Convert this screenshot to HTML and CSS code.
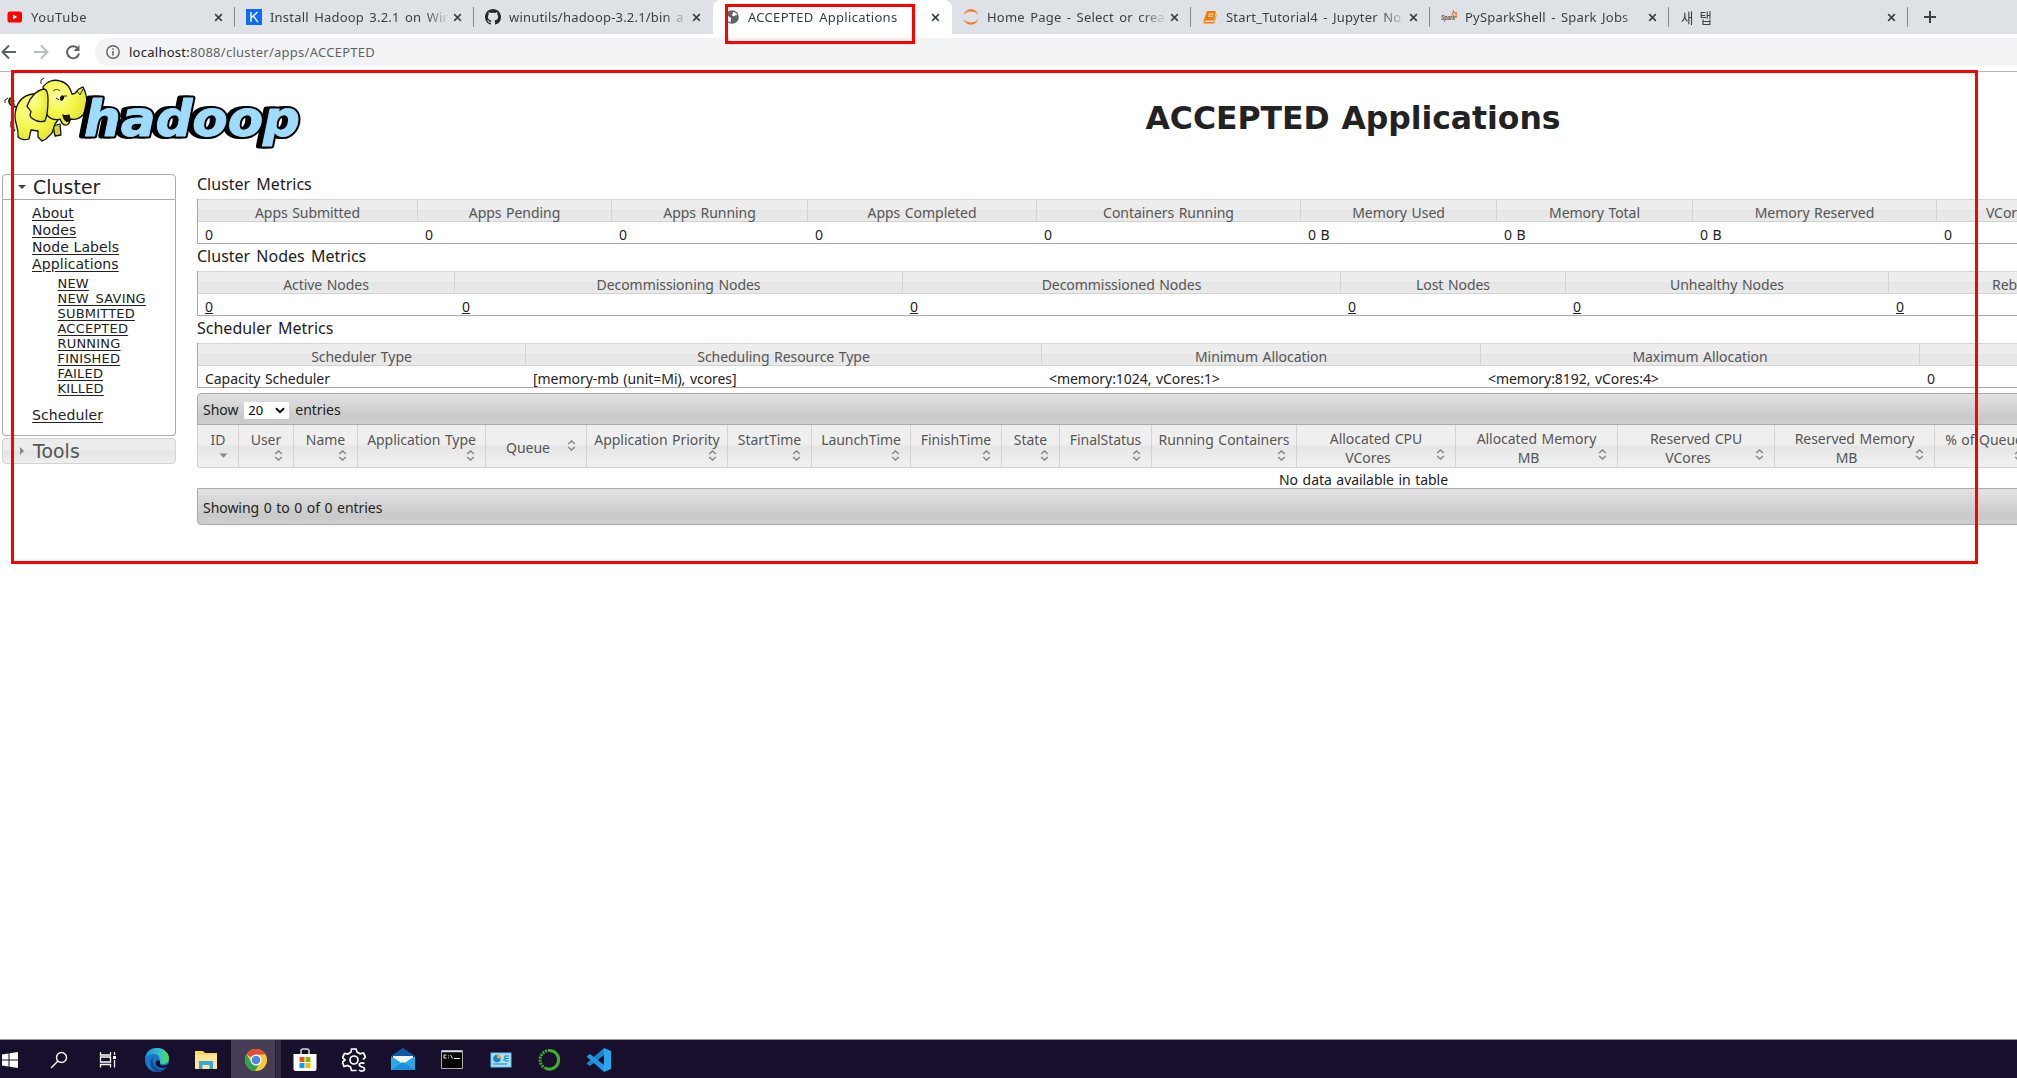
FILE: index.html
```html
<!DOCTYPE html>
<html lang="ko">
<head>
<meta charset="utf-8">
<title>ACCEPTED Applications</title>
<link rel="stylesheet" href="styles.css">
</head>
<body>
<svg class="defs" width="0" height="0">
  <symbol id="close" viewBox="0 0 10 10"><path d="M1.3 1.3 8.7 8.7M8.7 1.3 1.3 8.7" stroke="#3c4043" stroke-width="1.8" fill="none"/></symbol>
  <symbol id="sort" viewBox="0 0 9 11"><path d="M1.2 4 4.5 .9 7.8 4M1.2 7 4.5 10.1 7.8 7" stroke="#888" stroke-width="1.5" fill="none"/></symbol>
</svg>
<div class="screen">
  <header class="tabs">
    <div class="tab first"><svg class="fav" viewBox="0 0 16 16"><rect x="0.500" y="2.500" width="14.500" height="11" rx="2.600" fill="#f00"/><path d="M6 5.600v4.800L10.200 8z" fill="#fff"/></svg><span class="name">YouTube</span><svg class="x"><use href="#close"/></svg></div>
    <div class="tab"><svg class="fav" viewBox="0 0 16 16"><rect width="16" height="16" fill="#0a6cff"/><path d="M5 3v10M11.5 3 5.5 8.6M7.4 7.2 11.8 13" stroke="#fff" stroke-width="1.4" fill="none"/></svg><span class="name">Install Hadoop 3.2.1 on Win</span><svg class="x"><use href="#close"/></svg></div>
    <div class="tab plain"><svg class="fav" viewBox="0 0 16 16"><path fill="#24292e" d="M8 0C3.58 0 0 3.58 0 8c0 3.54 2.29 6.53 5.47 7.59.4.07.55-.17.55-.38v-1.5c-2 .43-2.53-.5-2.7-.95-.09-.23-.48-.95-.82-1.14-.28-.15-.68-.52-.01-.53.63-.01 1.08.58 1.23.82.72 1.21 1.87.87 2.33.66.07-.52.28-.87.51-1.07-1.78-.2-3.64-.89-3.64-3.95 0-.87.31-1.59.82-2.15-.08-.2-.36-1.02.08-2.12 0 0 .67-.21 2.2.82a7.6 7.6 0 0 1 4 0c1.53-1.04 2.2-.82 2.2-.82.44 1.1.16 1.92.08 2.12.51.56.82 1.27.82 2.15 0 3.07-1.87 3.75-3.65 3.95.29.25.54.73.54 1.48v2.2c0 .21.15.46.55.38A8 8 0 0 0 16 8c0-4.42-3.58-8-8-8z"/></svg><span class="name">winutils/hadoop-3.2.1/bin a</span><svg class="x"><use href="#close"/></svg></div>
    <div class="tab active"><svg class="fav" viewBox="0 0 16 16"><circle cx="8" cy="8" r="6.800" fill="#5f6368"/><path d="M2.500 6c2 .3 2 2 3.500 2.300S7 10 6.500 13.500C3.500 12.500 2 9.500 2.500 6zM9 3c2 0 4 1.500 4.300 3-1 .5-2.300-.2-2.800 1-1.500.7-3-.5-2.300-1.500S8.500 4.500 9 3z" fill="#fff"/></svg><span class="name">ACCEPTED Applications</span><svg class="x"><use href="#close"/></svg></div>
    <div class="tab"><svg class="fav" viewBox="0 0 16 16"><path d="M.5 6C2 2 5 .3 8 .3S14 2 15.500 6C13 3.300 11 2.500 8 2.500S3 3.300.5 6zM.5 10c1.500 4 4.500 5.700 7.500 5.700s6-1.700 7.500-5.700c-2.500 2.700-4.500 3.500-7.500 3.500S3 12.700.5 10z" fill="#f37726"/></svg><span class="name">Home Page - Select or crea</span><svg class="x"><use href="#close"/></svg></div>
    <div class="tab"><svg class="fav" viewBox="0 0 16 16"><path d="M5 2h9l-2 9.500H3.500L2.500 13H12l2.300-8 .2 2-2.300 7.500H2.600C1 14 1.500 12 2 10.500z" fill="#f57c00"/><path d="M6.500 5h5M6 7.200h5" stroke="#fff" stroke-width=".9"/></svg><span class="name">Start_Tutorial4 - Jupyter No</span><svg class="x"><use href="#close"/></svg></div>
    <div class="tab"><svg class="fav" viewBox="0 0 16 16"><path d="M10.500 6 12 4.500 12.500 2l1.300 2 1.900-.4-.8 2.300.8 2.300-2.500-.5" fill="none" stroke="#e8743b" stroke-width="1.200"/><text x="0" y="11" font-family="Liberation Sans" font-size="6.500" font-weight="bold" font-style="italic" textLength="14" lengthAdjust="spacingAndGlyphs" fill="#4d4d4d">Spark</text></svg><span class="name">PySparkShell - Spark Jobs</span><svg class="x"><use href="#close"/></svg></div>
    <div class="tab newtab"><span class="name ko">새 탭</span><svg class="x"><use href="#close"/></svg></div>
    <svg class="plus" viewBox="0 0 12 12"><path d="M6 0v12M0 6h12" stroke="#3c4043" stroke-width="2"/></svg>
  </header>
  <nav class="toolbar">
    <svg class="nav" viewBox="0 0 16 16"><path d="M15 8H2M8 1.500 1.500 8 8 14.500" stroke="#5f6368" stroke-width="2" fill="none"/></svg>
    <svg class="nav" viewBox="0 0 16 16"><path d="M1 8h13M8 1.500 14.500 8 8 14.500" stroke="#babcbe" stroke-width="2" fill="none"/></svg>
    <svg class="nav" viewBox="0 0 16 16"><path d="M13 4.800A6 6 0 1 0 14 9.500" stroke="#5f6368" stroke-width="2" fill="none"/><path d="M14.500 1v6h-6z" fill="#5f6368"/></svg>
    <div class="omnibox"><svg class="info" viewBox="0 0 14 14"><circle cx="7" cy="7" r="6.200" fill="none" stroke="#5f6368" stroke-width="1.400"/><path d="M7 6v4.500M7 3.300v1.500" stroke="#5f6368" stroke-width="1.500"/></svg><span class="url"><b>localhost:</b>8088/cluster/apps/ACCEPTED</span></div>
  </nav>
  <main class="page">
    <div class="banner">
      <svg class="logo" viewBox="0 0 304 76">
        <defs><radialGradient id="skin" cx=".35" cy=".35" r=".75"><stop stop-color="#fdfea0"/><stop offset=".5" stop-color="#f5f74c"/><stop offset="1" stop-color="#dfe22e"/></radialGradient></defs>
        <g stroke="#111" stroke-width="1.300" stroke-linejoin="round" fill="url(#skin)">
          <path d="M16 30c-4 0-8-3-7-7s5-2 5 2M14 46l-3-1 0 5 4 4" fill="#6d6e1a"/>
          <path d="M53 49l2 10 6-1-1-11z" fill="#d3d62c"/>
          <path d="M33 17C22 18 15 27 15 40c0 7 4 11 3 20 3 3 8 3 11 2l2-9 7 1v6l4 4 4-2 6-6 3-9 6-8-8-22z"/>
          <path d="M43 10c4-6 11-8 17-6 8 2 10 7 12 13 2 0 4-1 5-3 2-3 4-3 6-4 5 10 5 20 0 28-4 4-9 5-13 4 0 6-5 8-8 4l-2-4c-6 2-12-1-14-6z"/>
          <path d="M44 12c-7 1-14 8-17 17 1 3 4 4 4 6-2 3-1 5 2 7 4 3 8 3 12 2 3-7 3-13 3-21 0-6-1-11-4-11z"/>
          <path d="M63 38c2 1 4 1 6 0l1 5c-2 3-6 1-7-5z" fill="#2a100f"/>
        </g>
        <path d="M53 14c2-2 5-2 7 0M77 14l3 4 3-6M56 21l3 2M64 19h3M41 7V3l3-2M5 26v-3l3-2" fill="none" stroke="#222" stroke-width="1"/><ellipse cx="62" cy="21" rx="2" ry="2.800" fill="#111" transform="rotate(25 62 21)"/>
        <g font-family="DejaVu Sans" font-size="50" font-weight="bold" font-style="italic" stroke-linejoin="round">
          <text x="80" y="59" textLength="216" lengthAdjust="spacingAndGlyphs" fill="#000" stroke="#000" stroke-width="5">hadoop</text>
          <text x="84" y="58.500" textLength="216" lengthAdjust="spacingAndGlyphs" fill="#000" stroke="#000" stroke-width="5">hadoop</text>
          <text x="84" y="58.500" textLength="216" lengthAdjust="spacingAndGlyphs" fill="#9edcff" stroke="#9edcff" stroke-width="1">hadoop</text>
        </g>
      </svg>
      <h1>ACCEPTED Applications</h1>
    </div>
    <div class="body">
      <aside>
        <h3 class="open"><svg viewBox="0 0 8 8"><path d="M0 2h8L4 6z" fill="#454545"/></svg>Cluster</h3>
        <div class="menu">
          <ul><li><a>About</a></li><li><a>Nodes</a></li><li><a>Node Labels</a></li><li><a>Applications</a></li></ul>
          <ul class="sub"><li><a>NEW</a></li><li><a>NEW_SAVING</a></li><li><a>SUBMITTED</a></li><li><a>ACCEPTED</a></li><li><a>RUNNING</a></li><li><a>FINISHED</a></li><li><a>FAILED</a></li><li><a>KILLED</a></li></ul>
          <ul><li><a>Scheduler</a></li></ul>
        </div>
        <h3 class="closed"><svg viewBox="0 0 8 8"><path d="M2 0v8l4-4z" fill="#888"/></svg>Tools</h3>
      </aside>
      <section class="content">
        <h2>Cluster Metrics</h2>
        <div class="metrics t1">
          <b>Apps Submitted</b><b>Apps Pending</b><b>Apps Running</b><b>Apps Completed</b><b>Containers Running</b><b>Memory Used</b><b>Memory Total</b><b>Memory Reserved</b><b>VCores Used</b><b></b>
          <i>0</i><i>0</i><i>0</i><i>0</i><i>0</i><i>0 B</i><i>0 B</i><i>0 B</i><i>0</i><i></i>
        </div>
        <h2>Cluster Nodes Metrics</h2>
        <div class="metrics t2">
          <b>Active Nodes</b><b>Decommissioning Nodes</b><b>Decommissioned Nodes</b><b>Lost Nodes</b><b>Unhealthy Nodes</b><b>Rebooted Nodes</b><b></b>
          <i><a>0</a></i><i><a>0</a></i><i><a>0</a></i><i><a>0</a></i><i><a>0</a></i><i><a>0</a></i><i></i>
        </div>
        <h2>Scheduler Metrics</h2>
        <div class="metrics t3">
          <b>Scheduler Type</b><b>Scheduling Resource Type</b><b>Minimum Allocation</b><b>Maximum Allocation</b><b></b>
          <i>Capacity Scheduler</i><i>[memory-mb (unit=Mi), vcores]</i><i>&lt;memory:1024, vCores:1&gt;</i><i>&lt;memory:8192, vCores:4&gt;</i><i>0</i>
        </div>
        <div class="bar top">Show <span class="select">20<svg viewBox="0 0 10 7"><path d="M1 1.200 5 5.200 9 1.200" stroke="#000" stroke-width="2" fill="none"/></svg></span> entries</div>
        <div class="apps">
          <div><span>ID</span><svg class="s" viewBox="0 0 9 11"><path d="M.5 3.500h8L4.500 7.700z" fill="#888"/></svg></div>
          <div><span>User</span><svg class="s"><use href="#sort"/></svg></div>
          <div><span>Name</span><svg class="s"><use href="#sort"/></svg></div>
          <div><span>Application Type</span><svg class="s"><use href="#sort"/></svg></div>
          <div class="mid"><span>Queue</span><svg class="s"><use href="#sort"/></svg></div>
          <div><span>Application Priority</span><svg class="s"><use href="#sort"/></svg></div>
          <div><span>StartTime</span><svg class="s"><use href="#sort"/></svg></div>
          <div><span>LaunchTime</span><svg class="s"><use href="#sort"/></svg></div>
          <div><span>FinishTime</span><svg class="s"><use href="#sort"/></svg></div>
          <div><span>State</span><svg class="s"><use href="#sort"/></svg></div>
          <div><span>FinalStatus</span><svg class="s"><use href="#sort"/></svg></div>
          <div><span>Running Containers</span><svg class="s"><use href="#sort"/></svg></div>
          <div class="two"><span>Allocated CPU<em>VCores</em></span><svg class="s"><use href="#sort"/></svg></div>
          <div class="two"><span>Allocated Memory<em>MB</em></span><svg class="s"><use href="#sort"/></svg></div>
          <div class="two"><span>Reserved CPU<em>VCores</em></span><svg class="s"><use href="#sort"/></svg></div>
          <div class="two"><span>Reserved Memory<em>MB</em></span><svg class="s"><use href="#sort"/></svg></div>
          <div><span>% of Queue</span><svg class="s"><use href="#sort"/></svg></div>
          <div></div>
        </div>
        <div class="empty">No data available in table</div>
        <div class="bar bottom">Showing 0 to 0 of 0 entries</div>
      </section>
    </div>
  </main>
  <footer class="taskbar">
    <div class="app"><svg viewBox="0 0 24 24"><path d="M4 6.500 10.500 5.500V11.500H4zM11.500 5.300 20 4v7.500h-8.500zM4 12.500h6.500v6L4 17.500zM11.500 12.500H20V20l-8.500-1.300z" fill="#fff"/></svg></div>
    <div class="app"><svg viewBox="0 0 24 24"><circle cx="14.500" cy="9.500" r="5" fill="none" stroke="#fff" stroke-width="1.400"/><path d="M11 13l-7 7" stroke="#fff" stroke-width="1.500"/></svg></div>
    <div class="app"><svg viewBox="0 0 24 24"><path d="M4.500 4v3h10V4M4.500 19.500v-3h10v3M4.500 9h10v5h-10zM18.500 4v3M18.500 12v7.500" fill="none" stroke="#fff" stroke-width="1.300"/><rect x="17" y="8" width="3" height="3" fill="#fff"/></svg></div>
    <div class="app"><svg viewBox="0 0 24 24"><defs><linearGradient id="eg"><stop stop-color="#1d8ee0"/><stop offset=".6" stop-color="#2fc2c8"/><stop offset="1" stop-color="#61d94e"/></linearGradient></defs><circle cx="12" cy="12" r="12" fill="#1877c9"/><path d="M0 11C1 3 6 0 12 0c7 0 12 5 12 10 0 4-3 6-6 6-3 0-4-1-4-2 2-5-1-8-5-8-4 0-7 2-9 5z" fill="url(#eg)"/><path d="M9 9c-3 4-1 10 5 12 3 1 6 0 8-3-1 3-5 6-10 6-4-1-8-7-6-12z" fill="#114a92"/><path d="M13.500 12c3 1 1 3 1.500 4 1 2 5 2 8 0l1 1-2 2c-4 2-9 1-11-2-1-2 0-5 2.500-5z" fill="#170f2b"/></svg></div>
    <div class="app"><svg viewBox="0 0 24 24"><path d="M1 3h8l2 2h12v16H1z" fill="#ffd75e"/><path d="M1 7h22v14H1z" fill="#ffe694"/><path d="M5 13h14v8h-3.500v-4h-7v4H5z" fill="#35a7e0"/></svg></div>
    <div class="app current"><svg viewBox="0 0 24 24"><circle cx="12" cy="12" r="11" fill="#fbc932"/><path d="M12 12 2.500 6.500A11 11 0 0 1 21.500 6.500H12z" fill="#e24a3b"/><path d="M12 12 7.500 14.600 2.500 6.500A11 11 0 0 0 11 23l5-8.500z" fill="#2ba24c"/><circle cx="12" cy="12" r="5.500" fill="#fff"/><circle cx="12" cy="12" r="4.300" fill="#4b86ef"/></svg></div>
    <div class="app"><svg viewBox="0 0 24 24"><path d="M8 7V3q0-2 2-2h4q2 0 2 2v4" fill="none" stroke="#ddd" stroke-width="1.500"/><path d="M.5 6h23v15q0 2-2 2h-19q-2 0-2-2z" fill="#fff"/><path d="M6.500 9h5v5h-5z" fill="#f25022"/><path d="M12.500 9h5v5h-5z" fill="#7fba00"/><path d="M6.500 15h5v5h-5z" fill="#00a4ef"/><path d="M12.500 15h5v5h-5z" fill="#ffb900"/></svg></div>
    <div class="app"><svg viewBox="0 0 24 24"><path d="M14.500 22.500H9.500L8.500 19 5.500 17.500 2 18.500.5 14 3 12 .5 9.500 2.500 5.500 6 6 9 4 9.500 1H14l1 3 3 1.800 3.500-.8 2 4L21 11.500" fill="none" stroke="#fff" stroke-width="1.700"/><circle cx="12" cy="12" r="4" fill="none" stroke="#fff" stroke-width="1.700"/><path d="M22.500 15.500c-3-1.500-6 0-5 2s5 1 5 3.500-4 2.500-5.500 1" fill="none" stroke="#fff" stroke-width="1.700"/></svg></div>
    <div class="app"><svg viewBox="0 0 24 24"><path d="M0 8 12 0l12 8z" fill="#0c59a4"/><path d="M2 8h20v8H2z" fill="#f5f5f5"/><path d="M0 8l12 8 12-8v14H0z" fill="#2ba8e8"/><path d="M0 22 12 14l12 8z" fill="#1a8fdc"/></svg></div>
    <div class="app"><svg viewBox="0 0 24 24"><path d="M1.500 2.500h21v18h-21z" fill="#050505" stroke="#aaa"/><path d="M2 3.500h20" stroke="#ddd" stroke-width="1.500"/><path d="M6.500 7H4v3h2.500M8.500 7.500v.8M8.500 9.500v.8M10.500 7l2 3.500M14 10.500h6" stroke="#eee" stroke-width="1" fill="none"/></svg></div>
    <div class="app"><svg viewBox="0 0 24 24"><path d="M1.500 4.500h21v15h-21z" fill="#68c3f2"/><path d="M2.500 5.500h19v13h-19z" fill="#a7e0fa"/><circle cx="8" cy="10.500" r="3.800" fill="#1683c9"/><path d="M8 10.500V6.200a4 4 0 0 1 4 4.300z" fill="#f5a623"/><path d="M14 12h2V8h4M16 10.500h4M16 13h4M4 16h14" fill="none" stroke="#1683c9" stroke-width="1.200"/></svg></div>
    <div class="app"><svg viewBox="0 0 24 24"><path d="M12 2.500a9.300 9.300 0 1 1-5 17.500" fill="none" stroke="#3eb12b" stroke-width="3"/><path d="M12 2.500A9.300 9.300 0 0 0 7 20" fill="none" stroke="#3eb12b" stroke-width="3" stroke-dasharray="2 1"/></svg></div>
    <div class="app"><svg viewBox="0 0 24 24"><path d="M17 0l7 3v18l-7 3z" fill="#2ba7f0"/><path d="M17 0v7L3 18 0 16V15z" fill="#1b86cf"/><path d="M17 24v-7L3 6 0 8v1z" fill="#2196e3"/></svg></div>
  </footer>
  <div class="mark tabmark"></div>
  <div class="mark pagemark"></div>
</div>
</body>
</html>
```
FILE: styles.css
```css
* { box-sizing: border-box; }
body { margin: 0; background: #fff; color: #222; font: 14px/20px "Noto Sans", "Noto Sans CJK KR", sans-serif; letter-spacing: -.05px; word-spacing: 1px; }
svg { display: block; flex: none; }
.defs { position: absolute; }
.screen { position: relative; display: flex; flex-direction: column; width: 2017px; height: 1078px; overflow: hidden; }

.tabs { display: flex; height: 34px; background: #dee1e6; }
.tab { display: flex; align-items: center; width: 239px; height: 34px; padding: 0 11px; background: linear-gradient(#85888d, #85888d) right 7px / 1px 20px no-repeat; flex: none; }
.tab.first { width: 235px; padding-left: 7px; }
.tab.plain { background: none; }
.tab.active { background: #fff; border-radius: 8px 8px 0 0; }
.fav { width: 16px; height: 16px; }
.name { width: 178px; margin-left: 8px; overflow: hidden; white-space: nowrap; color: #3c4043; font-size: 13px; letter-spacing: .2px; word-spacing: 1.8px; -webkit-mask-image: linear-gradient(90deg, #000 155px, transparent 180px); mask-image: linear-gradient(90deg, #000 155px, transparent 180px); }
.first .name { letter-spacing: .5px; }
.active .name { letter-spacing: .3px; }
.name.ko { width: 200px; margin-left: 1px; font-size: 13.5px; font-family: "Noto Sans CJK KR", sans-serif; }
.x { width: 9px; height: 9px; margin-left: auto; margin-right: 1px; }
.plus { width: 12px; height: 12px; margin: 11px 0 0 16px; }

.toolbar { display: flex; align-items: center; height: 38px; border-bottom: 1px solid #b4b4b4; padding: 0 0 1px 1px; }
.nav { width: 16px; height: 16px; margin-right: 16px; }
.nav:nth-child(3) { margin-right: 14px; }
.omnibox { display: flex; align-items: center; flex: 1; height: 28px; padding-left: 11px; background: #f1f3f4; border-radius: 14px 0 0 14px; }
.info { width: 14px; height: 14px; }
.url { margin-left: 9px; color: #5f6368; font-size: 13px; letter-spacing: .26px; }
.url b { font-weight: 400; color: #202124; }

.page { flex: 1; overflow: hidden; }
.banner { display: flex; height: 102px; }
.logo { width: 304px; height: 76px; margin-top: 5px; }
h1 { width: 2098px; margin: 26px 0 0; flex: none; text-align: center; font: bold 31.5px/40px "DejaVu Sans", sans-serif; letter-spacing: -.05px; }
.body { display: flex; }
aside { width: 174px; margin: 0 21px 0 2px; flex: none; font: 14px/17px "DejaVu Sans", sans-serif; letter-spacing: .1px; word-spacing: 0; }
h3 { display: flex; align-items: center; height: 26px; margin: 0; padding-left: 15px; border: 1px solid #aaa; border-radius: 4px; background: #fff; font-size: 18.8px; font-weight: 400; }
h3 svg { width: 8px; height: 8px; margin-right: 7px; }
h3.open { border-radius: 4px 4px 0 0; }
h3.closed { margin-top: 2px; border-color: #d3d3d3; color: #555; background: linear-gradient(#ededed 0 45%, #e4e4e4 50%, #efefef); }
.menu { height: 236px; padding: 5px 0 0 29px; border: 1px solid #aaa; border-top: 0; border-radius: 0 0 4px 4px; }
ul { list-style: none; margin: 0; padding: 0; }
.sub { margin: 3px 0 11px 25.5px; font-size: 13px; line-height: 15px; letter-spacing: .2px; }
a { text-decoration: underline; text-underline-offset: 2px; }

.content { width: 2333px; flex: none; }
h2 { height: 25px; margin: 0; font-size: 16px; line-height: 20px; font-weight: 400; letter-spacing: 0; word-spacing: 2px; }
.metrics + h2 { height: 27px; padding-top: 2px; }
.metrics { display: grid; grid-template-rows: 23px 21px; border-left: 1px solid #aaa; border-bottom: 1px solid #aaa; }
.metrics b, .metrics i { font-weight: 400; font-style: normal; white-space: nowrap; }
.metrics b { padding-top: 3px; text-align: center; color: #555; border: solid #d3d3d3; border-width: 1px 1px 1px 0; background: linear-gradient(#ededed 0 45%, #e5e5e5 50%, #eaeaea); }
.metrics i { padding: 2px 0 0 7px; line-height: 21px; }
.metrics a { text-underline-offset: 1px; }
.t1 { grid-template-columns: 220px 194px 196px 229px 264px 196px 196px 244px 182px 1fr; }
.t2 { grid-template-columns: 257px 448px 438px 225px 323px 317px 1fr; }
.t3 { grid-template-columns: 328px 516px 439px 439px 1fr; }
.bar { display: flex; align-items: center; padding: 2px 0 0 5px; border: 1px solid #aaa; background: linear-gradient(#e2e2e2, #cacaca 75%, #cdcdcd); }
.bar.top { height: 32px; margin-top: 5px; border-radius: 4px 4px 0 0; }
.bar.bottom { height: 37px; border-radius: 0 0 4px 4px; }
.select { display: flex; align-items: center; justify-content: space-between; width: 45px; height: 17px; margin: 0 6px; padding: 0 4px; background: #fff; color: #000; font-size: 13px; }
.select svg { width: 10px; height: 7px; }
.apps { display: grid; height: 42px; grid-template-columns: 41px 55px 64px 128px 101px 141px 84px 99px 91px 58px 92px 145px 159px 162px 157px 160px 99px 1fr; border-left: 1px solid #d3d3d3; background: linear-gradient(#efefef 0 45%, #e6e6e6 52%, #f1f1f1); color: #555; }
.apps div { display: grid; border-right: 1px solid #d3d3d3; border-bottom: 1px solid #d3d3d3; white-space: nowrap; }
.apps div > * { grid-area: 1 / 1; }
.apps span { padding-top: 5px; text-align: center; }
.apps em { display: block; padding-right: 16px; font-style: normal; }
.s { width: 9px; height: 11px; justify-self: end; margin: 25px 10px 0 0; }
.apps .mid span { padding: 13px 16px 0 0; }
.apps .mid .s { margin-top: 15px; }
.apps .two span { padding-top: 4px; line-height: 19px; }
.apps .two .s { margin-top: 24px; }
.empty { height: 21px; padding-top: 3px; line-height: 19px; text-align: center; }

.taskbar { display: flex; height: 39px; border-top: 1px solid #999; background: #170f2b; margin-top: auto; }
.app { display: flex; align-items: center; justify-content: center; width: 49.1px; height: 38px; flex: none; padding-top: 2px; }
.app:first-child { margin-left: -14px; }
.app svg { width: 24px; height: 24px; margin-right: 1px; }
.app.current { background: linear-gradient(90deg, #453d56 44px, #231b37 44px, #231b37 45px, #332b45 45px); }

.mark { position: absolute; border: 3px solid #f00; pointer-events: none; }
.tabmark { left: 725px; top: 4px; width: 190px; height: 40px; }
.pagemark { left: 11px; top: 70px; width: 1967px; height: 494px; }
```
